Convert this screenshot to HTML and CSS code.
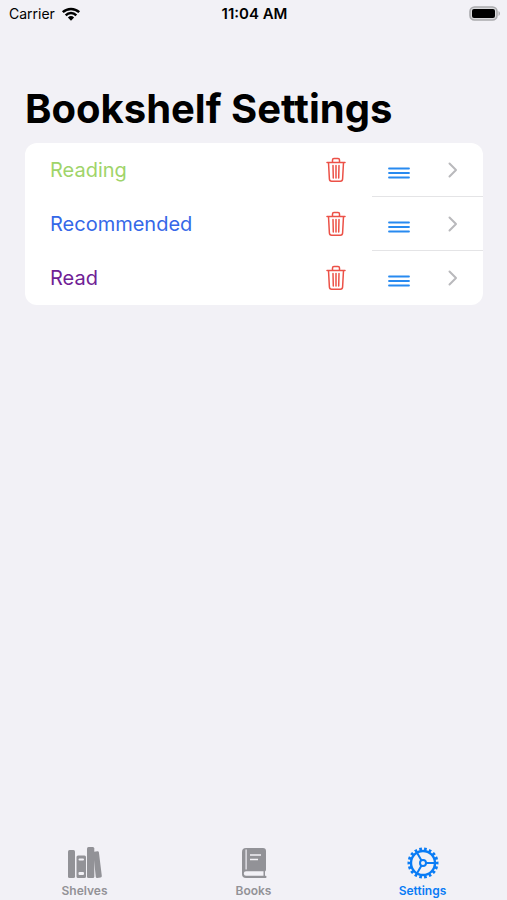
FILE: index.html
```html
<!DOCTYPE html>
<html lang="en">
<head>
<meta charset="utf-8">
<meta name="viewport" content="width=device-width, initial-scale=1">
<title>Bookshelf Settings</title>
<link rel="stylesheet" href="styles.css">
</head>
<body>
<svg class="sprite" aria-hidden="true">
  <symbol id="trash" viewBox="0 0 20 26">
    <path d="M1 5.500h18M6.500 5V3Q6.500 1.500 8 1.500h4Q13.500 1.500 13.500 3V5M2.500 5.500l.9 16.500q.1 2.200 2.200 2.200h8.800q2.100 0 2.200-2.200L17.500 5.500M7 8.500l.3 12.500M10 8.500v12.500M13 8.500l-.3 12.500" fill="none" stroke="currentColor" stroke-width="1.500" stroke-linecap="round" stroke-linejoin="round"/>
  </symbol>
  <symbol id="lines" viewBox="0 0 22 26">
    <path d="M1 11.500h20M1 16h20M1 20.500h20" stroke="currentColor" stroke-width="1.800" stroke-linecap="round"/>
  </symbol>
  <symbol id="chevron" viewBox="0 0 10 16">
    <path d="M1.500 1.500L8 8l-6.500 6.500" fill="none" stroke="currentColor" stroke-width="2" stroke-linecap="round" stroke-linejoin="round"/>
  </symbol>
</svg>
<header class="status">
  <span class="carrier">Carrier
    <svg width="20" height="14" viewBox="0 0 20 14" aria-hidden="true"><path d="M1.800 5.200a12 12 0 0 1 16.400 0M4.700 8.300a7.500 7.500 0 0 1 10.600 0" fill="none" stroke="#000" stroke-width="2.500"/><path d="M6.900 10.500a4.500 4.500 0 0 1 6.200 0L10 13.700z"/></svg>
  </span>
  <time class="clock">11:04 AM</time>
  <svg class="battery" width="31" height="16" viewBox="0 0 31 16" aria-hidden="true"><rect x="1" y="1" width="27" height="13" rx="4.500" fill="#d9d9dc" stroke="#aaaaad" stroke-width="1.600"/><rect x="3" y="3" width="23" height="9" rx="2"/><path d="M29.500 5q1.500.8 1.500 2.500t-1.500 2.500z" fill="#aaaaad"/></svg>
</header>
<main class="content">
  <h1 class="title">Bookshelf Settings</h1>
  <ul class="list">
    <li class="row">
      <span class="name green">Reading</span>
      <button class="icon-button trash" aria-label="Delete Reading"><svg width="20" height="26"><use href="#trash"/></svg></button>
      <div class="tail">
        <button class="icon-button lines" aria-label="Reorder Reading"><svg width="22" height="26"><use href="#lines"/></svg></button>
        <a class="chevron" href="#reading" aria-label="Open Reading"><svg width="10" height="16"><use href="#chevron"/></svg></a>
      </div>
    </li>
    <li class="row">
      <span class="name blue">Recommended</span>
      <button class="icon-button trash" aria-label="Delete Recommended"><svg width="20" height="26"><use href="#trash"/></svg></button>
      <div class="tail">
        <button class="icon-button lines" aria-label="Reorder Recommended"><svg width="22" height="26"><use href="#lines"/></svg></button>
        <a class="chevron" href="#recommended" aria-label="Open Recommended"><svg width="10" height="16"><use href="#chevron"/></svg></a>
      </div>
    </li>
    <li class="row">
      <span class="name purple">Read</span>
      <button class="icon-button trash" aria-label="Delete Read"><svg width="20" height="26"><use href="#trash"/></svg></button>
      <div class="tail">
        <button class="icon-button lines" aria-label="Reorder Read"><svg width="22" height="26"><use href="#lines"/></svg></button>
        <a class="chevron" href="#read" aria-label="Open Read"><svg width="10" height="16"><use href="#chevron"/></svg></a>
      </div>
    </li>
  </ul>
</main>
<nav class="tabs">
  <a class="tab" href="#shelves">
    <svg width="36" height="34" viewBox="0 0 36 34" aria-hidden="true">
      <rect x="1" y="4" width="7" height="28" rx="1.500"/>
      <path fill-rule="evenodd" d="M11 9.500h6.500q1.500 0 1.500 1.500v19.500q0 1.500-1.500 1.500H11q-1.500 0-1.500-1.500V11q0-1.500 1.500-1.500zM12.500 12.500q-1 0-1 1t1 1h3.500q1 0 1-1t-1-1zM12.500 26q-1 0-1 1v1q0 1 1 1h3.500q1 0 1-1v-1q0-1-1-1z"/>
      <rect x="20" y="1" width="7.300" height="31" rx="1.500"/>
      <path d="M27 5.800l3.500-.5q1.200-.1 1.400 1l2.900 23.500q.2 1.400-1.200 1.700l-3.400.5q-1.200.1-1.400-1L27 14z"/>
    </svg>
    Shelves
  </a>
  <a class="tab" href="#books">
    <svg width="26" height="34" viewBox="0 0 26 34" aria-hidden="true">
      <path fill-rule="evenodd" d="M5 2h17q3 0 3 3v18.500q0 1.500-1 2v4.200h.5q1 0 1 1.200t-1 1.100H5q-4 0-4-4V6q0-4 4-4zM4.500 3.500v20H5.700v-20zM9 8.300v1.500h11V8.300zM9 12.800v1.500h8v-1.500zM5 25.300q-2.200 0-2.200 2.200T5 29.700h17.500v-4.400z"/>
    </svg>
    Books
  </a>
  <a class="tab active" href="#settings" aria-current="page">
    <svg width="34" height="34" viewBox="-17 -17 34 34" fill="none" stroke="currentColor" aria-hidden="true">
      <circle r="12" stroke-width="2.400"/>
      <circle r="14" stroke-width="3" pathLength="90" stroke-dasharray="2.700 2.300" stroke-dashoffset="1.350"/>
      <circle r="3" stroke-width="2"/>
      <path d="M3 0h9M-1.500 -2.600l-4.600-8M-1.500 2.600l-4.600 8" stroke-width="2"/>
    </svg>
    Settings
  </a>
</nav>
</body>
</html>
```

FILE: styles.css
```css
* { box-sizing: border-box; }

body {
  margin: 0;
  min-height: 100vh;
  display: flex;
  flex-direction: column;
  background: #f2f1f6;
  color: #000;
  font-family: Inter, "Liberation Sans", sans-serif;
}

svg { display: block; flex: none; }
a { color: inherit; text-decoration: none; }
.sprite { display: none; }

.status {
  display: grid;
  grid-template-columns: 1fr auto 1fr;
  align-items: center;
  height: 27px;
  padding: 0 7px 0 9px;
  font-size: 14px;
}
.carrier { display: flex; align-items: center; gap: 6px; }
.clock { font-size: 15px; font-weight: 600; }
.battery { justify-self: end; }

.content { flex: 1; padding: 57px 24px 0 25px; }
.title {
  margin: 0 0 9px;
  font-size: 40px;
  line-height: 50px;
  font-weight: 700;
}

.list {
  margin: 0;
  padding: 0;
  list-style: none;
  background: #fff;
  border-radius: 12px;
}
.row {
  display: flex;
  align-items: center;
  height: 54px;
  padding-left: 25px;
}
.name { flex: 1; font-size: 20px; }
.green { color: #9fd46a; }
.blue { color: #3568e8; }
.purple { color: #6f2195; }

.icon-button {
  padding: 0;
  border: 0;
  background: none;
}
.trash { color: #ec5147; margin-right: 26px; }
.tail {
  display: flex;
  align-items: center;
  align-self: stretch;
  justify-content: space-between;
  width: 111px;
  padding: 0 25px 0 16px;
  border-bottom: 1px solid #e4e4e6;
}
.row:last-child .tail { border-bottom-color: transparent; }
.lines { color: #288af0; }
.chevron { color: #b9b9bc; }

.tabs { display: flex; padding-bottom: 1px; }
.tab {
  flex: 1;
  display: flex;
  flex-direction: column;
  align-items: center;
  gap: 3px;
  color: #929297;
  fill: currentColor;
  font-size: 12px;
  line-height: 16px;
  font-weight: 600;
}
.active { color: #0a7cf5; }
```
